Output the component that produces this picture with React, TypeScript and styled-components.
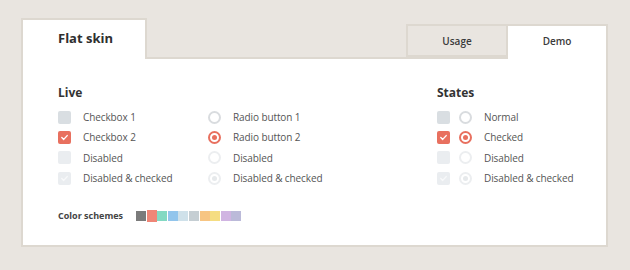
import React from 'react';
import styled, { createGlobalStyle } from 'styled-components';

const GlobalStyle = createGlobalStyle`
  html, body {
    margin: 0;
    padding: 0;
    background: #e9e5e0;
  }
  body {
    font-family: "Open Sans", "Liberation Sans", sans-serif;
    color: #555;
  }
`;

const Page = styled.div`
  width: 630px;
  height: 270px;
  padding: 18px 0 0 21px;
  box-sizing: border-box;
`;

const Frame = styled.div`
  width: 587px;
`;

const TabBar = styled.div`
  display: flex;
  align-items: flex-end;
  height: 39px;
`;

const TitleTab = styled.div`
  position: relative;
  z-index: 1;
  width: 126px;
  height: 41px;
  margin-bottom: -2px;
  box-sizing: border-box;
  background: #fff;
  border: 2px solid #ddd8d0;
  border-bottom: none;
  padding: 9px 0 0 35px;
  font-size: 13px;
  font-weight: 700;
  color: #2f2f2f;
`;

const Spacer = styled.div`
  flex: 1;
`;

const Tab = styled.div<{ $active?: boolean }>`
  position: relative;
  z-index: 1;
  width: ${(p) => (p.$active ? 100 : 102)}px;
  height: ${(p) => (p.$active ? 35 : 33)}px;
  margin-bottom: ${(p) => (p.$active ? -2 : 0)}px;
  box-sizing: border-box;
  display: flex;
  align-items: center;
  justify-content: center;
  padding-bottom: ${(p) => (p.$active ? 4 : 0)}px;
  background: ${(p) => (p.$active ? '#fff' : '#e9e5e0')};
  border: 2px solid #ddd8d0;
  border-bottom: ${(p) => (p.$active ? 'none' : '2px solid #ddd8d0')};
  border-left: ${(p) => (p.$active ? 'none' : '2px solid #ddd8d0')};
  font-size: 10px;
  font-weight: 600;
  color: #3a3a3a;
`;

const Card = styled.div`
  height: 190px;
  box-sizing: border-box;
  background: #fff;
  border: 2px solid #ddd8d0;
  padding: 25px 0 0 35px;
`;

const Sections = styled.div`
  display: flex;
`;

const Section = styled.div<{ $width?: number }>`
  width: ${(p) => (p.$width ? `${p.$width}px` : 'auto')};
`;

const Heading = styled.div`
  font-size: 12px;
  font-weight: 700;
  color: #333;
  height: 17px;
  line-height: 17px;
  margin-bottom: 6px;
`;

const Columns = styled.div`
  display: grid;
  grid-template-columns: 150px auto;
`;

const List = styled.div`
  display: flex;
  flex-direction: column;
`;

const Row = styled.div`
  display: flex;
  align-items: center;
  height: 20.3px;
`;

const Label = styled.span`
  margin-left: 12px;
  font-size: 10px;
  font-weight: 500;
  letter-spacing: -0.1px;
  color: #555;
`;

const BoxShape = styled.span<{ $bg: string }>`
  width: 13px;
  height: 13px;
  border-radius: 2px;
  background: ${(p) => p.$bg};
  display: inline-flex;
  align-items: center;
  justify-content: center;
  flex: none;
`;

const RadioShape = styled.span<{ $ring: string }>`
  width: 13px;
  height: 13px;
  box-sizing: border-box;
  border-radius: 50%;
  border: 2px solid ${(p) => p.$ring};
  background: #fff;
  display: inline-flex;
  align-items: center;
  justify-content: center;
  flex: none;
`;

const Dot = styled.span<{ $color: string }>`
  width: 5px;
  height: 5px;
  border-radius: 50%;
  background: ${(p) => p.$color};
`;

const Pair = styled.span`
  display: inline-flex;
  gap: 9px;
`;

type State = 'normal' | 'checked' | 'disabled' | 'disabledChecked';

const RED = '#e8705f';

const Checkbox: React.FC<{ state: State }> = ({ state }) => {
  const bg =
    state === 'normal' ? '#d9dee2' : state === 'checked' ? RED : '#eaedf0';
  const showCheck = state === 'checked' || state === 'disabledChecked';
  return (
    <BoxShape $bg={bg}>
      {showCheck && (
        <svg width="9" height="9" viewBox="0 0 9 9">
          <polyline
            points="1.8,4.6 3.7,6.4 7.2,2.6"
            fill="none"
            stroke={state === 'checked' ? '#fff' : '#f8f9fa'}
            strokeWidth="1.4"
            strokeLinecap="round"
            strokeLinejoin="round"
          />
        </svg>
      )}
    </BoxShape>
  );
};

const Radio: React.FC<{ state: State }> = ({ state }) => {
  const ring =
    state === 'normal' ? '#d9dcdf' : state === 'checked' ? RED : '#eceef0';
  return (
    <RadioShape $ring={ring}>
      {state === 'checked' && <Dot $color={RED} />}
      {state === 'disabledChecked' && <Dot $color="#e6e9eb" />}
    </RadioShape>
  );
};

const SchemeRow = styled.div`
  display: flex;
  align-items: center;
  margin-top: 21px;
`;

const SchemeLabel = styled.span`
  font-size: 9px;
  font-weight: 700;
  color: #444;
  width: 78px;
`;

const Swatches = styled.div`
  display: flex;
  gap: 0.6px;
  align-items: center;
`;

const Swatch = styled.span<{ $color: string; $active?: boolean }>`
  width: 10px;
  height: ${(p) => (p.$active ? 12 : 10)}px;
  background: ${(p) => p.$color};
`;

const states: { state: State; label: string }[] = [
  { state: 'normal', label: 'Normal' },
  { state: 'checked', label: 'Checked' },
  { state: 'disabled', label: 'Disabled' },
  { state: 'disabledChecked', label: 'Disabled & checked' },
];

const checkboxLabels = ['Checkbox 1', 'Checkbox 2', 'Disabled', 'Disabled & checked'];
const radioLabels = ['Radio button 1', 'Radio button 2', 'Disabled', 'Disabled & checked'];

const schemes = [
  '#7b7b7b',
  '#ef8677',
  '#83d9c2',
  '#92c5ec',
  '#cfe1ea',
  '#c5ced3',
  '#f7c583',
  '#f5dd82',
  '#d0b4e2',
  '#bbbad9',
];

const App: React.FC = () => {
  return (
    <Page>
      <GlobalStyle />
      <Frame>
        <TabBar>
          <TitleTab>Flat skin</TitleTab>
          <Spacer />
          <Tab>Usage</Tab>
          <Tab $active>Demo</Tab>
        </TabBar>
        <Card>
          <Sections>
            <Section $width={379}>
              <Heading>Live</Heading>
              <Columns>
                <List>
                  {states.map((s, i) => (
                    <Row key={s.state}>
                      <Checkbox state={s.state} />
                      <Label>{checkboxLabels[i]}</Label>
                    </Row>
                  ))}
                </List>
                <List>
                  {states.map((s, i) => (
                    <Row key={s.state}>
                      <Radio state={s.state} />
                      <Label>{radioLabels[i]}</Label>
                    </Row>
                  ))}
                </List>
              </Columns>
            </Section>
            <Section>
              <Heading>States</Heading>
              <List>
                {states.map((s) => (
                  <Row key={s.state}>
                    <Pair>
                      <Checkbox state={s.state} />
                      <Radio state={s.state} />
                    </Pair>
                    <Label>{s.label}</Label>
                  </Row>
                ))}
              </List>
            </Section>
          </Sections>
          <SchemeRow>
            <SchemeLabel>Color schemes</SchemeLabel>
            <Swatches>
              {schemes.map((c, i) => (
                <Swatch key={c} $color={c} $active={i === 1} />
              ))}
            </Swatches>
          </SchemeRow>
        </Card>
      </Frame>
    </Page>
  );
};

export default App;
